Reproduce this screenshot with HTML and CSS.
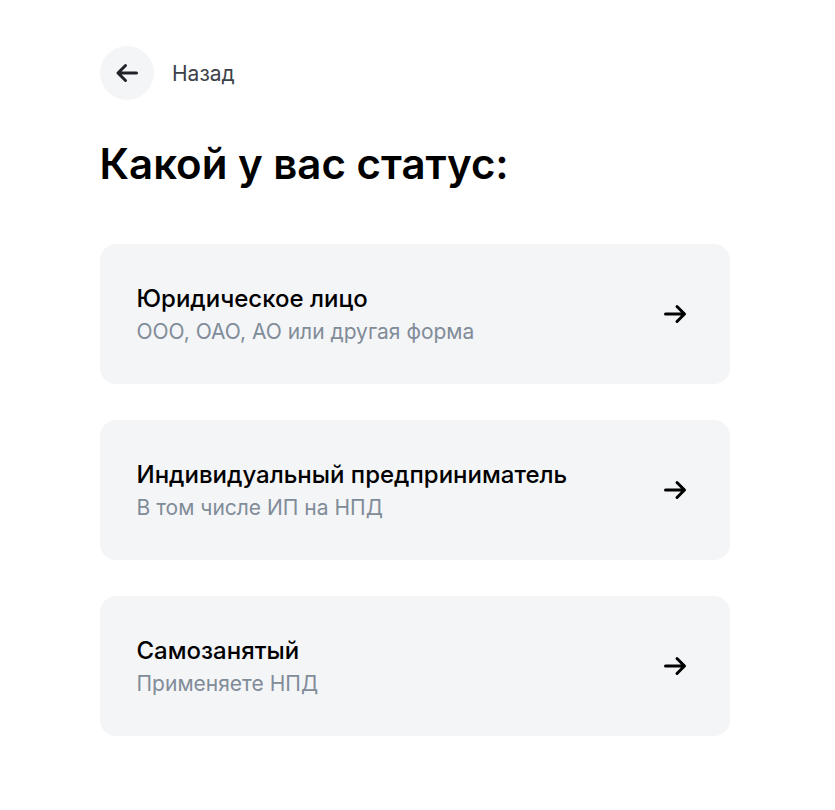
FILE: index.html
```html
<!DOCTYPE html>
<html lang="ru">
<head>
  <title>Какой у вас статус</title>
  <meta charset="utf-8">
  <meta name="viewport" content="width=device-width, initial-scale=1">
  <link rel="stylesheet" href="styles.css">
</head>
<body>
  <main class="page">
    <a class="back" href="#">
      <span class="back-icon">
        <svg width="24" height="24" viewBox="0 0 24 24" fill="none">
          <path d="M21.500 12H3M10.500 4.500L3 12l7.500 7.500" stroke="#1F2229" stroke-width="3" stroke-linecap="round" stroke-linejoin="round"/>
        </svg>
      </span>
      <span class="back-title">Назад</span>
    </a>

    <h1 class="title">Какой у вас статус:</h1>

    <div class="cards">
      <a class="card" href="#">
        <span class="card-text">
          <span class="card-title">Юридическое лицо</span>
          <span class="card-subtitle">ООО, ОАО, АО или другая форма</span>
        </span>
        <svg class="card-arrow" width="24" height="24" viewBox="0 0 24 24" fill="none">
          <path d="M1.500 12h19M13 4.500l7.500 7.500-7.500 7.500" stroke="#000000" stroke-width="3" stroke-linecap="round" stroke-linejoin="round"/>
        </svg>
      </a>
      <a class="card" href="#">
        <span class="card-text">
          <span class="card-title">Индивидуальный предприниматель</span>
          <span class="card-subtitle">В том числе ИП на НПД</span>
        </span>
        <svg class="card-arrow" width="24" height="24" viewBox="0 0 24 24" fill="none">
          <path d="M1.500 12h19M13 4.500l7.500 7.500-7.500 7.500" stroke="#000000" stroke-width="3" stroke-linecap="round" stroke-linejoin="round"/>
        </svg>
      </a>
      <a class="card" href="#">
        <span class="card-text">
          <span class="card-title">Самозанятый</span>
          <span class="card-subtitle">Применяете НПД</span>
        </span>
        <svg class="card-arrow" width="24" height="24" viewBox="0 0 24 24" fill="none">
          <path d="M1.500 12h19M13 4.500l7.500 7.500-7.500 7.500" stroke="#000000" stroke-width="3" stroke-linecap="round" stroke-linejoin="round"/>
        </svg>
      </a>
    </div>
  </main>
</body>
</html>
```

FILE: styles.css
```css
*, *::before, *::after {
  margin: 0;
  box-sizing: border-box;
}

body {
  background-color: #FFFFFF;
  color: #000000;
  font-family: "Inter", sans-serif;
}

a {
  color: inherit;
  text-decoration: none;
}

.page {
  width: 630px;
  margin-left: 100px;
  padding-top: 46px;
  padding-bottom: 74px;
}

.back {
  display: flex;
  align-items: center;
  gap: 18px;
}

.back-icon {
  display: flex;
  align-items: center;
  justify-content: center;
  width: 54px;
  height: 54px;
  border-radius: 50%;
  background-color: #F4F5F7;
}

.back-title {
  padding-top: 2px;
  color: #3D4248;
  font-size: 21px;
  line-height: 24px;
}

.title {
  margin-top: 38px;
  margin-left: -0.5px;
  font-size: 42px;
  font-weight: 600;
  line-height: 52px;
}

.cards {
  display: flex;
  flex-direction: column;
  gap: 36px;
  margin-top: 54px;
}

.card {
  display: flex;
  align-items: center;
  justify-content: space-between;
  height: 140px;
  padding: 0 42px 0 36.5px;
  border-radius: 16px;
  background-color: #F4F5F7;
}

.card-text {
  display: flex;
  flex-direction: column;
  gap: 5px;
  padding-top: 3px;
}

.card-title {
  font-size: 24px;
  font-weight: 500;
  line-height: 28px;
}

.card-subtitle {
  color: #818C99;
  font-size: 21px;
  line-height: 28px;
}
```
